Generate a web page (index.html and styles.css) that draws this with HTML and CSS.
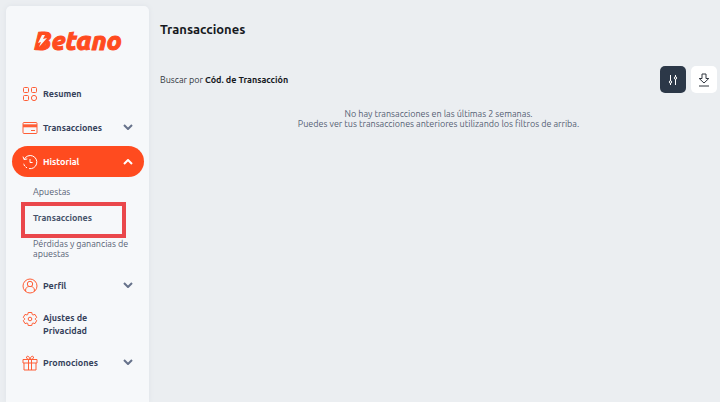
FILE: index.html
```html
<!DOCTYPE html>
<html lang="es">
<head>
<meta charset="utf-8">
<meta name="viewport" content="width=device-width, initial-scale=1">
<title>Betano - Transacciones</title>
<link rel="stylesheet" href="styles.css">
</head>
<body>
<div class="layout">
  <aside class="sidebar">
    <a class="logo" href="#">Betano<svg class="bolt" viewBox="0 0 14 18" aria-hidden="true"><path class="fill" d="M4 2h8L10 8H2Z"/><path class="fill" d="M2 8h9L8 16H1Z"/><path class="flash" d="M6 3h3L7 7l4-1-8 9 2-5-3 1Z"/></svg></a>
    <nav class="menu">
      <a class="item" href="#">
        <svg class="icon" viewBox="0 0 16 16"><rect x="1.500" y="1.500" width="5" height="5" rx="1"/><rect x="9.500" y="1.500" width="5" height="5" rx="1"/><rect x="1.500" y="9.500" width="5" height="5" rx="1"/><circle cx="12" cy="12" r="2.600"/></svg>
        <span class="label">Resumen</span>
      </a>
      <button class="item" type="button">
        <svg class="icon" viewBox="0 0 16 16"><rect x="1" y="2.500" width="14" height="11" rx="1"/><path class="solid" d="M1 4.300h14v3H1z"/><path d="M9 10.500h4"/></svg>
        <span class="label">Transacciones</span>
        <svg class="chevron" viewBox="0 0 10 6"><path d="m1 1 4 4 4-4"/></svg>
      </button>
      <button class="item active" type="button" aria-expanded="true">
        <svg class="icon" viewBox="0 0 16 16"><path d="M2.300 5.200A6.600 6.600 0 1 1 7 14.600M1 2.600l1.100 3 3.200-.7M8 5v3.500h2.600"/><path class="dots" d="M5 13.900 2.600 12 1.400 9"/></svg>
        <span class="label">Historial</span>
        <svg class="chevron" viewBox="0 0 10 6"><path d="m1 5 4-4 4 4"/></svg>
      </button>
      <div class="submenu">
        <a href="#">Apuestas</a>
        <a class="current" href="#">Transacciones</a>
        <a href="#">Pérdidas y ganancias de apuestas</a>
      </div>
      <button class="item" type="button">
        <svg class="icon" viewBox="0 0 16 16"><circle cx="8" cy="8" r="7"/><circle cx="8" cy="6" r="2.700"/><path d="M3.600 13.200V12c0-2 1.500-3.200 3-3.400M12.400 13.200V12c0-2-1.500-3.200-3-3.400"/></svg>
        <span class="label">Perfil</span>
        <svg class="chevron" viewBox="0 0 10 6"><path d="m1 1 4 4 4-4"/></svg>
      </button>
      <a class="item tall" href="#">
        <svg class="icon" viewBox="0 0 16 16"><path d="M6.200 1.500h3.600l.4 2 .8.500 2-.6 1.700 3-1.400 1.300v.6l1.400 1.300-1.700 3-2-.6-.8.500-.4 2H6.200l-.4-2-.8-.5-2 .6-1.700-3 1.400-1.300v-.6L1.300 6.400l1.700-3 2 .6.800-.5Z"/><circle cx="8" cy="8" r="1.800"/></svg>
        <span class="label">Ajustes de Privacidad</span>
      </a>
      <button class="item" type="button">
        <svg class="icon" viewBox="0 0 16 16"><path d="M1 4.500h14V8H1zM2 8v7h12V8M6.500 4.500V15M9.500 4.500V15M8 4.500C6 4.500 4 3.500 4.500 2S7.500 1 8 4.500C8.500 1 11 .5 11.500 2S10 4.500 8 4.500"/></svg>
        <span class="label">Promociones</span>
        <svg class="chevron" viewBox="0 0 10 6"><path d="m1 1 4 4 4-4"/></svg>
      </button>
    </nav>
  </aside>
  <main class="content">
    <h1>Transacciones</h1>
    <div class="toolbar">
      <p class="search">Buscar por <strong>Cód. de Transacción</strong></p>
      <button class="tool dark" type="button" aria-label="Filtros"><svg viewBox="0 0 12 14"><path d="M3.500 2v6M3.500 10v2M8.500 2v2M8.500 6v6"/><circle cx="3.500" cy="9" r="1.200"/><circle cx="8.500" cy="5" r="1.200"/></svg></button>
      <button class="tool" type="button" aria-label="Descargar"><svg viewBox="0 0 12 14"><path d="M4 1h4v4.500h2.800L6 10 1.200 5.500H4ZM1 13h10"/></svg></button>
    </div>
    <p class="empty">No hay transacciones en las últimas 2 semanas.<br>Puedes ver tus transacciones anteriores utilizando los filtros de arriba.</p>
  </main>
</div>
</body>
</html>
```
FILE: styles.css
```css
* { box-sizing: border-box; }
body {
  margin: 0;
  background: #ebeef1;
  color: #566174;
  font: 9px/10px Ubuntu, "Noto Sans", sans-serif;
}
button { font: inherit; border: 0; padding: 0; background: none; color: inherit; text-align: left; }
a { color: inherit; text-decoration: none; }
svg { fill: none; stroke: currentColor; stroke-linejoin: round; flex: none; }
h1, p { margin: 0; }
.layout { display: flex; min-height: 100vh; }
.sidebar {
  flex: none;
  width: 143px;
  margin: 6px 0 0 6px;
  padding: 16px 5px 0 6px;
  background: #f6f8fa;
  border-radius: 5px 5px 0 0;
  box-shadow: 0 0 5px #dde2e7;
}
.logo {
  position: relative;
  display: block;
  margin-left: 22px;
  color: #ff4b1f;
  font-size: 26px;
  font-weight: 800;
  font-style: italic;
  line-height: 38px;
  -webkit-text-stroke: 1px #ff4b1f;
}
.bolt { position: absolute; left: 2px; top: 10px; width: 14px; height: 18px; stroke: none; }
.fill { fill: #ff4b1f; }
.flash { fill: #f6f8fa; }
.menu { display: flex; flex-direction: column; gap: 3px; margin-top: 18px; }
.item {
  display: flex;
  align-items: center;
  gap: 5px;
  min-height: 31px;
  padding: 1px 11px 0 10px;
  border-radius: 16px;
  color: #35415a;
  font-weight: 700;
  line-height: 13px;
}
.icon { width: 16px; height: 16px; color: #ff5e36; }
.solid { fill: currentColor; stroke: none; }
.dots { stroke-dasharray: 2 1; }
.label { flex: 1; }
.chevron { width: 10px; height: 6px; margin-bottom: 3px; stroke-width: 2; color: #66728a; }
.active { background: #ff4b1f; color: #fff; }
.active .icon, .active .chevron { color: #fff; }
.active .chevron { margin-bottom: 0; }
.submenu { display: flex; flex-direction: column; align-items: flex-start; gap: 16px; padding: 7px 5px 8px 21px; }
.current {
  position: relative;
  color: #46536a;
  font-weight: 700;
}
.current::after {
  content: "";
  position: absolute;
  inset: -11px -34px -15px -12px;
  border: 4px solid #ea474b;
}
.tall { min-height: 40px; padding-right: 40px; }
.tall .icon { margin-bottom: 11px; }
.content { flex: 1; padding: 20px 3px 0 11px; }
h1 { color: #16191e; font-size: 13px; line-height: 18px; }
.toolbar { display: flex; align-items: center; gap: 5px; margin-top: 28px; }
.search { flex: 1; color: #30353d; }
.search strong { color: #16191e; }
.tool { display: grid; place-items: center; width: 26px; height: 27px; border-radius: 5px; background: #fff; color: #30363f; }
.tool svg { width: 12px; height: 14px; }
.dark { background: #2c3848; color: #fff; }
.empty { margin-top: 16px; text-align: center; }
```
